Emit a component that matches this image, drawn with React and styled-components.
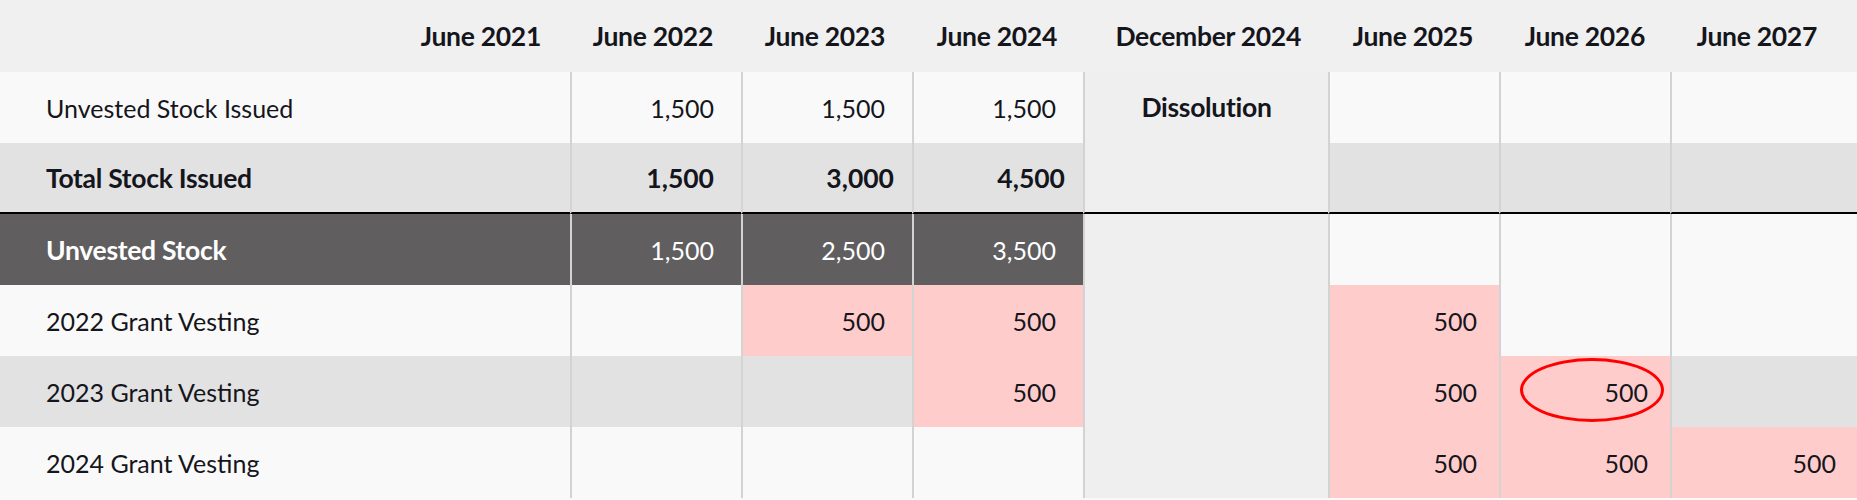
import styled, { createGlobalStyle } from "styled-components";

const GlobalStyle = createGlobalStyle`
  html, body {
    margin: 0;
    padding: 0;
    background: #f9f9f9;
  }
  body {
    font-family: Lato, "Noto Sans", sans-serif;
    color: #15151c;
  }
`;

const TONES = {
  light: "#f9f9f9",
  gray: "#e2e2e2",
  dark: "#605e5f",
  pink: "#ffcccc",
};

const BOLD_SIZE = "26.5px";

const HEADERS = [
  "June 2021",
  "June 2022",
  "June 2023",
  "June 2024",
  "December 2024",
  "June 2025",
  "June 2026",
  "June 2027",
];

// right padding of each value column (the band column is left out)
const PADS = [27, 27, 27, 22, 22, 21];

const pink = (v, circled) => ({ v, tone: "pink", circled });

const ROWS = [
  {
    label: "Unvested Stock Issued",
    tone: "light",
    cells: ["1,500", "1,500", "1,500", null, null, null],
  },
  {
    label: "Total Stock Issued",
    tone: "gray",
    bold: true,
    rule: true,
    cells: ["1,500", "3,000", "4,500", null, null, null],
  },
  {
    label: "Unvested Stock",
    tone: "dark",
    boldLabel: true,
    cells: [
      "1,500",
      "2,500",
      "3,500",
      { tone: "light" },
      { tone: "light" },
      { tone: "light" },
    ],
  },
  {
    label: "2022 Grant Vesting",
    tone: "light",
    cells: [null, pink("500"), pink("500"), pink("500"), null, null],
  },
  {
    label: "2023 Grant Vesting",
    tone: "gray",
    cells: [null, null, pink("500"), pink("500"), pink("500", true), null],
  },
  {
    label: "2024 Grant Vesting",
    tone: "light",
    cells: [null, null, null, pink("500"), pink("500"), pink("500")],
  },
];

const Table = styled.div`
  width: 1857px;
  font-size: 25px;
`;

const HeaderRow = styled.div`
  display: grid;
  grid-template-columns: 1fr repeat(4, 172px) 244px repeat(3, 172px);
  height: 72px;
  padding-right: 13px;
  background: #f0f0f0;
`;

const HeadCell = styled.div`
  display: flex;
  align-items: center;
  justify-content: flex-end;
  padding-right: 27px;
  font-size: ${BOLD_SIZE};
  font-weight: 700;
  letter-spacing: -0.3px;
`;

const Body = styled.div`
  display: grid;
  grid-template-columns: 570px repeat(3, 171px) 245px repeat(2, 171px) 1fr;
  grid-auto-rows: 71px;
`;

const LabelCell = styled.div`
  display: flex;
  align-items: center;
  box-sizing: border-box;
  padding-left: 46px;
  background: ${(p) => TONES[p.$tone]};
  color: ${(p) => (p.$tone === "dark" ? "#ffffff" : "inherit")};
  font-size: ${(p) => (p.$bold ? BOLD_SIZE : "25px")};
  font-weight: ${(p) => (p.$bold ? 700 : 400)};
  letter-spacing: ${(p) => (p.$bold ? "-0.3px" : "0")};
  border-bottom: ${(p) => (p.$rule ? "2px solid #000" : "none")};
`;

const ValueCell = styled.div`
  position: relative;
  display: flex;
  align-items: center;
  justify-content: flex-end;
  box-sizing: border-box;
  padding-right: ${(p) => p.$pad}px;
  background: ${(p) => TONES[p.$tone]};
  color: ${(p) => (p.$tone === "dark" ? "#ffffff" : "inherit")};
  font-size: ${(p) => (p.$bold ? BOLD_SIZE : "25px")};
  font-weight: ${(p) => (p.$bold ? 700 : 400)};
  border-left: 2px solid #d3d3d3;
  border-bottom: ${(p) => (p.$rule ? "2px solid #000" : "none")};
`;

const BandCell = styled.div`
  grid-column: 5;
  grid-row: ${(p) => p.$rows};
  display: flex;
  justify-content: center;
  box-sizing: border-box;
  background: #efefef;
  border-left: 2px solid #d3d3d3;
  border-bottom: ${(p) => (p.$rule ? "2px solid #000" : "none")};
  font-size: ${BOLD_SIZE};
  font-weight: 700;
  letter-spacing: -0.3px;
  line-height: 70px;
`;

const Circle = styled.span`
  position: absolute;
  left: 19px;
  top: 2px;
  width: 144px;
  height: 64px;
  box-sizing: border-box;
  border: 3.5px solid #ff0000;
  border-radius: 50%;
  pointer-events: none;
`;

function Row({ row }) {
  return (
    <>
      <LabelCell
        $tone={row.tone}
        $bold={row.bold || row.boldLabel}
        $rule={row.rule}
      >
        {row.label}
      </LabelCell>
      {row.cells.map((c, i) => {
        const cell = typeof c === "string" ? { v: c } : c || {};
        const pad = row.bold && i > 0 && i < 3 ? 18 : PADS[i];
        return (
          <ValueCell
            key={i}
            $tone={cell.tone || row.tone}
            $bold={row.bold}
            $rule={row.rule}
            $pad={pad}
          >
            {cell.v}
            {cell.circled && <Circle />}
          </ValueCell>
        );
      })}
    </>
  );
}

export default function App() {
  return (
    <>
      <GlobalStyle />
      <Table>
        <HeaderRow>
          <div />
          {HEADERS.map((h) => (
            <HeadCell key={h}>{h}</HeadCell>
          ))}
        </HeaderRow>
        <Body>
          <BandCell $rows="1 / span 2" $rule>
            Dissolution
          </BandCell>
          <BandCell $rows="3 / span 4" />
          {ROWS.map((row) => (
            <Row key={row.label} row={row} />
          ))}
        </Body>
      </Table>
    </>
  );
}
